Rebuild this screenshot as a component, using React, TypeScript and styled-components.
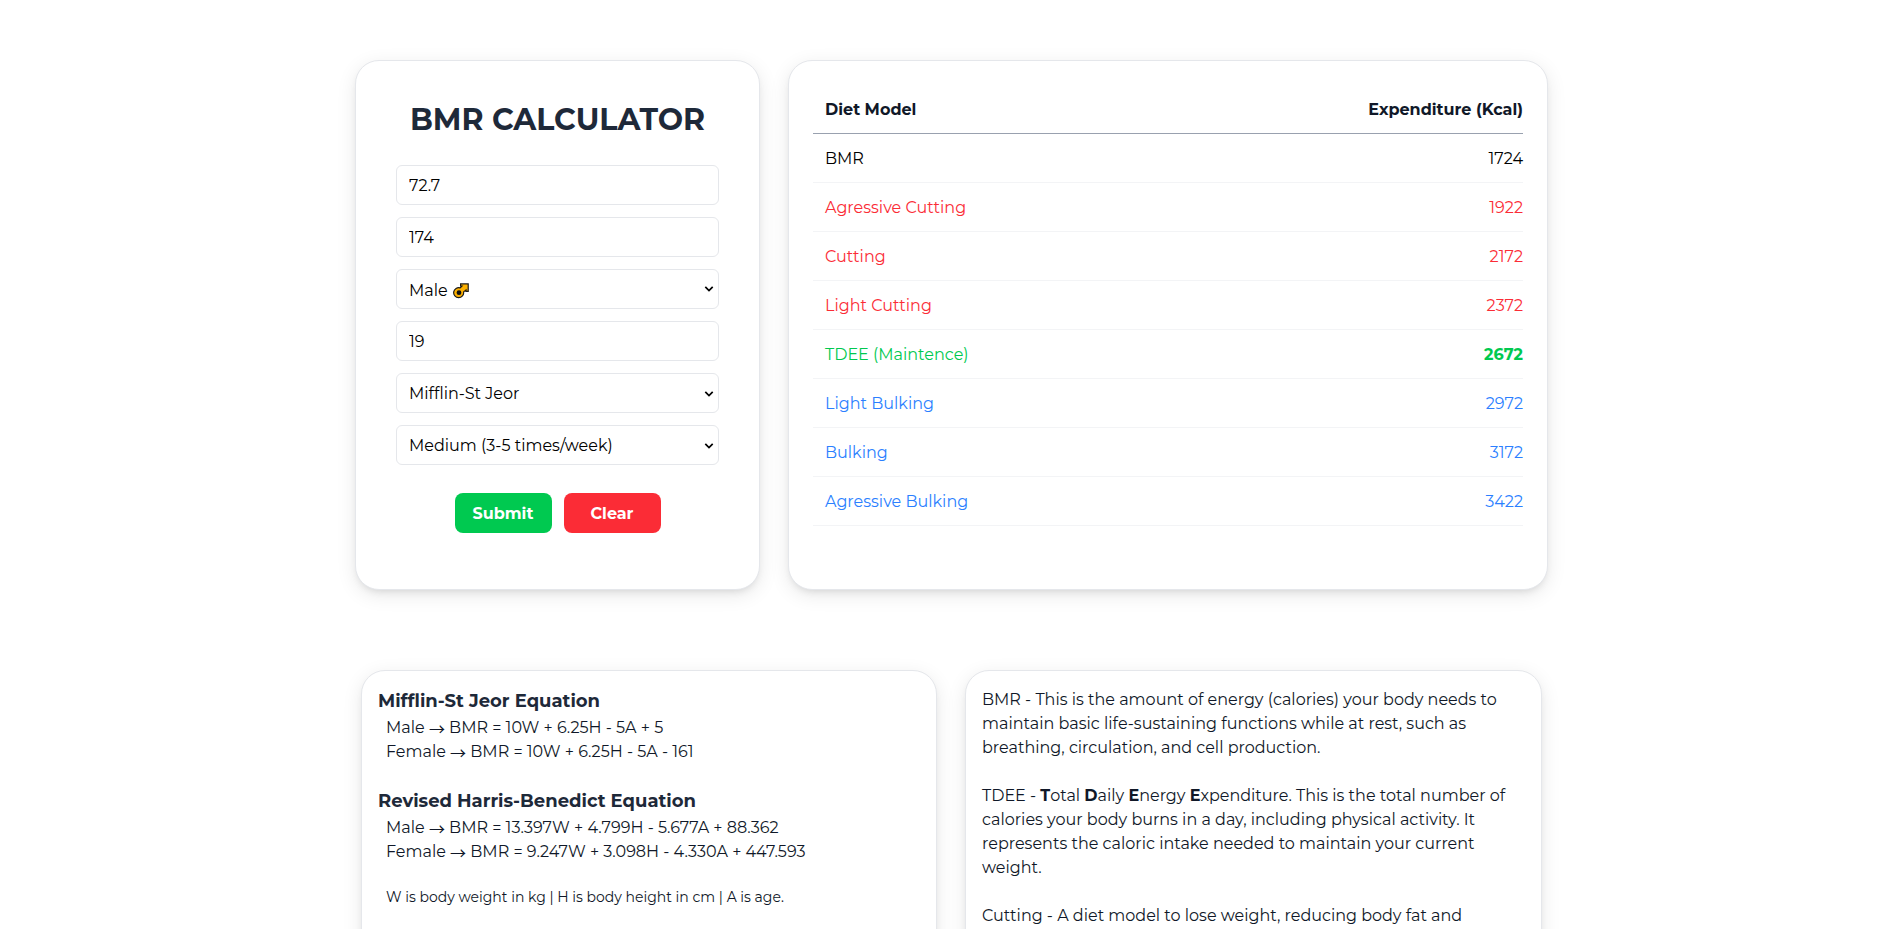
import React from "react";
import styled, { createGlobalStyle } from "styled-components";

const GlobalStyle = createGlobalStyle`
  *, *::before, *::after { box-sizing: border-box; }
  html, body { margin: 0; height: 100%; background: #fff; }
  body {
    overflow: hidden;
    font-family: "Montserrat", "Inter", sans-serif;
    font-size: 16px;
    line-height: 24px;
    color: #000;
  }
  h1, h2, p { margin: 0; }
`;

const Page = styled.main`
  height: 929px;
  overflow: hidden;
  padding-top: 60px;
  display: flex;
  flex-direction: column;
  align-items: center;
  gap: 80px;
`;

const TopRow = styled.section`
  flex: none;
  width: 1193px;
  height: 530px;
  display: grid;
  grid-template-columns: 405px 760px;
  gap: 28px;
`;

const BottomRow = styled.section`
  flex: none;
  width: 1181px;
  display: grid;
  grid-template-columns: 576px 577px;
  gap: 28px;
`;

const Card = styled.div`
  background: #fff;
  border: 1px solid #e5e7eb;
  border-radius: 24px;
  box-shadow: 0 5px 20px rgba(0, 0, 0, 0.09), 0 4px 8px -4px rgba(0, 0, 0, 0.14);
`;

const FormCard = styled(Card)`
  padding: 41px 40px 40px;
  display: flex;
  flex-direction: column;
  align-items: center;
`;

const TableCard = styled(Card)`
  padding: 24px;
`;

const NoteCard = styled(Card)`
  padding: 16px;
  min-height: 420px;
  color: #101828;
`;

const GlossaryCard = styled(NoteCard)`
  padding-top: 17px;
`;

const Title = styled.h1`
  font-size: 30px;
  line-height: 36px;
  font-weight: 700;
  color: #1e2939;
  white-space: nowrap;
`;

const Form = styled.form`
  width: 323px;
  margin-top: 27px;
  display: flex;
  flex-direction: column;
  gap: 12px;
`;

const Input = styled.input`
  width: 100%;
  height: 40px;
  padding: 0 12px;
  border: 1px solid #e5e7eb;
  border-radius: 6px;
  outline: none;
  background: #fff;
  color: #000;
  font: inherit;
`;

const SelectBox = styled.div`
  position: relative;
  height: 40px;
`;

const Select = styled.select<{ $drop?: number }>`
  appearance: none;
  width: 100%;
  height: 40px;
  padding: ${(p) => p.$drop ?? 2}px 28px 0 12px;
  border: 1px solid #e5e7eb;
  border-radius: 6px;
  outline: none;
  background: #fff;
  color: #000;
  font: inherit;
`;

const Chevron = styled.svg<{ $top: number }>`
  position: absolute;
  right: 5px;
  top: ${(p) => p.$top}px;
  pointer-events: none;
`;

const MaleSign = styled.svg`
  position: absolute;
  left: 57px;
  top: 14px;
  pointer-events: none;
`;

const Actions = styled.div`
  margin-top: 16px;
  display: flex;
  justify-content: center;
  gap: 12px;
`;

const Button = styled.button<{ $bg: string }>`
  width: 97px;
  height: 40px;
  padding: 2px 0 0;
  border: 0;
  border-radius: 8px;
  background: ${(p) => p.$bg};
  color: #fff;
  font: inherit;
  font-weight: 700;
`;

const Table = styled.div`
  display: flex;
  flex-direction: column;
`;

const Row = styled.div<{ $color: string }>`
  height: 49px;
  padding: 13px 0 11px 12px;
  display: flex;
  justify-content: space-between;
  border-bottom: 1px solid #f3f4f6;
  color: ${(p) => p.$color};
`;

const HeadRow = styled(Row)`
  border-bottom-color: #99a1af;
  font-weight: 700;
`;

const Value = styled.span<{ $bold?: boolean }>`
  font-weight: ${(p) => (p.$bold ? 700 : 400)};
`;

const Equation = styled.div`
  margin-bottom: 23px;
`;

const EquationTitle = styled.h2`
  margin-bottom: 1px;
  font-size: 18px;
  line-height: 28px;
  font-weight: 700;
  color: #1e2939;
`;

const EquationLine = styled.p`
  padding-left: 8px;
`;

const Arrow = styled.span`
  font-family: "Noto Sans CJK SC", sans-serif;
  line-height: 0;
  vertical-align: -2px;
`;

const Legend = styled.p`
  padding-left: 8px;
  font-size: 14px;
  line-height: 20px;
`;

const Paragraph = styled.p`
  margin-bottom: 24px;
`;

const RED = "#fb2c36";
const GREEN = "#00c950";
const BLUE = "#2b7fff";

const rows = [
  { name: "BMR", value: "1724", color: "#000" },
  { name: "Agressive Cutting", value: "1922", color: RED },
  { name: "Cutting", value: "2172", color: RED },
  { name: "Light Cutting", value: "2372", color: RED },
  { name: "TDEE (Maintence)", value: "2672", color: GREEN, bold: true },
  { name: "Light Bulking", value: "2972", color: BLUE },
  { name: "Bulking", value: "3172", color: BLUE },
  { name: "Agressive Bulking", value: "3422", color: BLUE },
];

const equations = [
  {
    title: "Mifflin-St Jeor Equation",
    male: "10W + 6.25H - 5A + 5",
    female: "10W + 6.25H - 5A - 161",
  },
  {
    title: "Revised Harris-Benedict Equation",
    male: "13.397W + 4.799H - 5.677A + 88.362",
    female: "9.247W + 3.098H - 4.330A + 447.593",
  },
];

function SelectArrow({ top = 17 }: { top?: number }) {
  return (
    <Chevron $top={top} width="10" height="8" viewBox="0 0 10 8">
      <path d="M1.3 1.8 5 5.6 8.7 1.8" fill="none" stroke="#000" strokeWidth="1.7" />
    </Chevron>
  );
}

function BmrForm() {
  return (
    <FormCard>
      <Title>BMR CALCULATOR</Title>
      <Form>
        <Input defaultValue="72.7" />
        <Input defaultValue="174" />
        <SelectBox>
          <Select $drop={4}>
            <option>Male</option>
          </Select>
          <MaleSign width="16" height="16" viewBox="0 0 16 16">
            <path
              d="M7.6.9H15.2V8.4H13V7L10.6 8.9A5 5 0 1 1 7.2 4.9L9 3H7.6Z"
              fill="#fcb000"
              stroke="#1a1a1a"
              strokeWidth="1.2"
            />
            <circle cx="6" cy="9.7" r="2.4" fill="#111" />
          </MaleSign>
          <SelectArrow top={16} />
        </SelectBox>
        <Input defaultValue="19" />
        <SelectBox>
          <Select>
            <option>Mifflin-St Jeor</option>
          </Select>
          <SelectArrow />
        </SelectBox>
        <SelectBox>
          <Select>
            <option>Medium (3-5 times/week)</option>
          </Select>
          <SelectArrow />
        </SelectBox>
        <Actions>
          <Button type="button" $bg={GREEN}>Submit</Button>
          <Button type="button" $bg={RED}>Clear</Button>
        </Actions>
      </Form>
    </FormCard>
  );
}

function DietTable() {
  return (
    <TableCard>
      <Table>
        <HeadRow $color="#101828">
          <span>Diet Model</span>
          <span>Expenditure (Kcal)</span>
        </HeadRow>
        {rows.map((r) => (
          <Row key={r.name} $color={r.color}>
            <span>{r.name}</span>
            <Value $bold={r.bold}>{r.value}</Value>
          </Row>
        ))}
      </Table>
    </TableCard>
  );
}

function Equations() {
  return (
    <NoteCard>
      {equations.map((e) => (
        <Equation key={e.title}>
          <EquationTitle>{e.title}</EquationTitle>
          <EquationLine>
            Male <Arrow>→</Arrow> BMR = {e.male}
          </EquationLine>
          <EquationLine>
            Female <Arrow>→</Arrow> BMR = {e.female}
          </EquationLine>
        </Equation>
      ))}
      <Legend>W is body weight in kg | H is body height in cm | A is age.</Legend>
    </NoteCard>
  );
}

function Glossary() {
  return (
    <GlossaryCard>
      <Paragraph>
        BMR - This is the amount of energy (calories) your body needs to maintain basic life-sustaining
        functions while at rest, such as breathing, circulation, and cell production.
      </Paragraph>
      <Paragraph>
        TDEE - <b>T</b>otal <b>D</b>aily <b>E</b>nergy <b>E</b>xpenditure. This is the total number of
        calories your body burns in a day, including physical activity. It represents the caloric intake
        needed to maintain your current weight.
      </Paragraph>
      <Paragraph>Cutting - A diet model to lose weight, reducing body fat and</Paragraph>
    </GlossaryCard>
  );
}

export default function App() {
  return (
    <>
      <GlobalStyle />
      <Page>
        <TopRow>
          <BmrForm />
          <DietTable />
        </TopRow>
        <BottomRow>
          <Equations />
          <Glossary />
        </BottomRow>
      </Page>
    </>
  );
}
